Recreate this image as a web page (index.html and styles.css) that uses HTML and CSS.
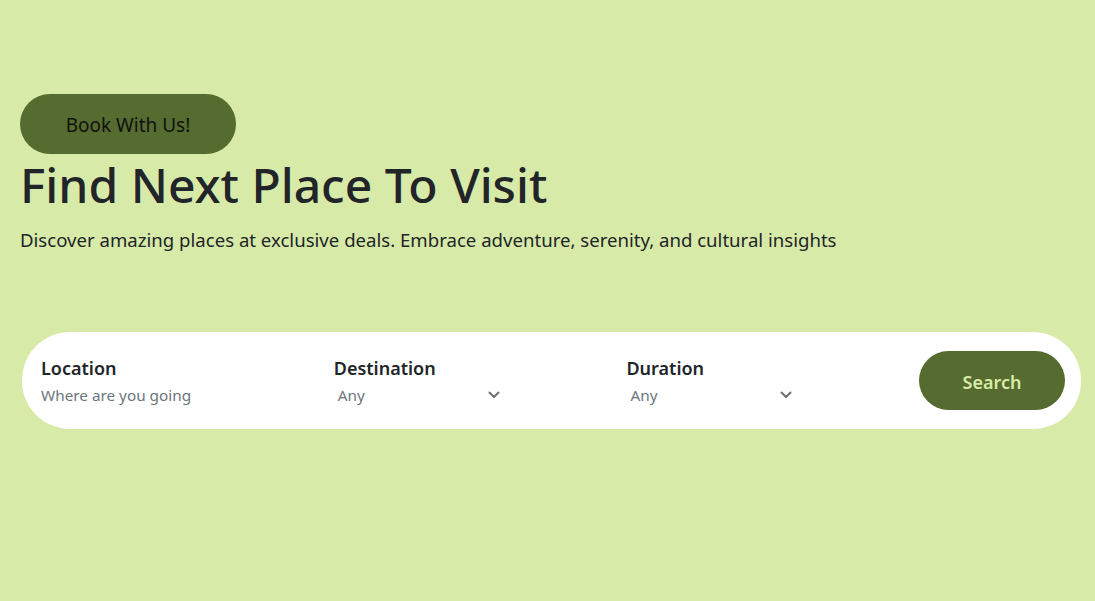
FILE: index.html
```html
<!DOCTYPE html>
<html lang="en">
<head>
<meta charset="utf-8">
<title>Find Next Place To Visit</title>
<link rel="stylesheet" href="styles.css">
</head>
<body>
<main class="hero">
  <button class="book-btn" type="button">Book With Us!</button>
  <h1 class="title">Find Next Place To Visit</h1>
  <p class="lead">Discover amazing places at exclusive deals. Embrace adventure, serenity, and cultural insights</p>

  <form class="search-bar">
    <div class="field">
      <label class="field-label">Location</label>
      <input class="field-input" type="text" placeholder="Where are you going">
    </div>
    <div class="field">
      <label class="field-label">Destination</label>
      <div class="select">
        <span class="select-value">Any</span>
        <svg class="chev" width="12" height="8" viewBox="0 0 12 8"><path d="M1.5 1.5 6 6l4.5-4.5" fill="none" stroke="#6f7070" stroke-width="2" stroke-linecap="round" stroke-linejoin="round"/></svg>
      </div>
    </div>
    <div class="field">
      <label class="field-label">Duration</label>
      <div class="select">
        <span class="select-value">Any</span>
        <svg class="chev" width="12" height="8" viewBox="0 0 12 8"><path d="M1.5 1.5 6 6l4.5-4.5" fill="none" stroke="#6f7070" stroke-width="2" stroke-linecap="round" stroke-linejoin="round"/></svg>
      </div>
    </div>
    <button class="search-btn" type="button">Search</button>
  </form>
</main>
</body>
</html>
```
FILE: styles.css
```css
* { box-sizing: border-box; }
html, body { margin: 0; height: 100%; }
body {
  background: #d8eaa8;
  font-family: "Noto Sans", "Open Sans", sans-serif;
  color: #212529;
}
.hero {
  padding: 94px 14px 0 20px;
  display: flex;
  flex-direction: column;
  align-items: flex-start;
}
.book-btn {
  width: 216px;
  height: 60px;
  border: none;
  border-radius: 30px;
  background: #556b2f;
  color: #111;
  font-family: inherit;
  font-size: 19px;
  padding: 2px 0 0;
}
.title {
  margin: 2px 0 0;
  font-size: 48px;
  font-weight: 500;
  line-height: 1.2;
  letter-spacing: 0;
}
.lead {
  margin: 12px 0 0;
  font-size: 18.6px;
  line-height: 1.5;
}
.search-bar {
  margin: 79px 0 0 2px;
  width: 1059px;
  height: 97px;
  background: #fff;
  border-radius: 48px;
  display: flex;
  align-items: center;
  padding: 0 16px 0 19px;
}
.field {
  width: 293px;
  display: flex;
  flex-direction: column;
}
.field-label {
  font-size: 18px;
  font-weight: 600;
  line-height: 1.3;
  color: #212529;
}
.field-input {
  border: none;
  outline: none;
  padding: 0;
  margin-top: 5px;
  font-family: inherit;
  font-size: 15.3px;
  color: #6c757d;
  background: transparent;
  width: 240px;
}
.field-input::placeholder { color: #6c757d; }
.select {
  width: 178px;
  margin-top: 5px;
  display: flex;
  align-items: center;
  justify-content: space-between;
  padding: 0 12px 0 4px;
  font-size: 15.3px;
  color: #6c757d;
}
.chev { display: block; }
.search-btn {
  margin-left: auto;
  width: 146px;
  height: 59px;
  border: none;
  border-radius: 30px;
  background: #556b2f;
  color: #d8eaa8;
  font-family: inherit;
  font-size: 18px;
  font-weight: 600;
  padding: 3px 0 0;
}
```
